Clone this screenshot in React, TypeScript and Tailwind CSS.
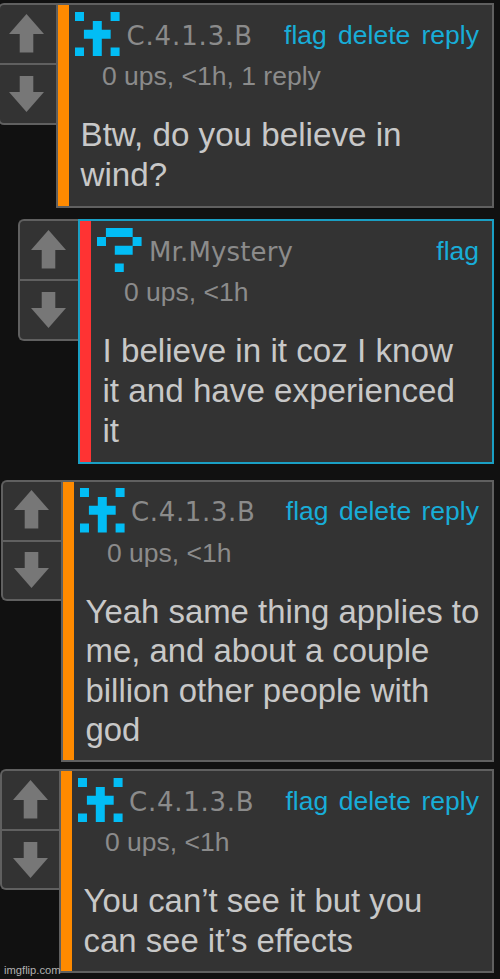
import React from "react";

type Comment = {
  name: string;
  meta: string;
  lines: string[];
  links: string[];
  row: string;
  votes: string;
  arrow: string;
  card: string;
  bar: string;
  nameClass: string;
  linksClass: string;
  textClass: string;
  icon: "cross" | "question";
};

const glyphs = {
  cross: ["1...1", "..1..", ".111.", "..1..", "1.1.1"],
  question: [".111.", "1...1", "..11.", ".....", "..1.."],
};

function Avatar({ icon }: { icon: "cross" | "question" }) {
  return (
    <svg className="block h-[44.5px] w-[44.5px] shrink-0" viewBox="0 0 5 5" fill="#02bdf5">
      <path
        d={glyphs[icon]
          .flatMap((row, y) => row.split("").map((c, x) => (c === "1" ? `M${x} ${y}h1.01v1.01h-1.01z` : "")))
          .join("")}
      />
    </svg>
  );
}

function Votes({ className, arrow }: { className: string; arrow: string }) {
  return (
    <div
      className={`flex shrink-0 flex-col overflow-hidden rounded-l-[6px] border-y-2 border-l-2 border-[#606060] bg-[#333] ${className}`}
    >
      <div className={`flex h-[60px] shrink-0 justify-center border-b-2 border-[#606060] pt-[8.5px] ${arrow}`}>
        <svg className="block h-[39px] w-[35px] shrink-0" viewBox="0 0 35 39" fill="#777">
          <path d="M17.5 0L35 20H24.3V38.5H10.7V20H0z" />
        </svg>
      </div>
      <div className={`flex flex-1 justify-center pt-[10.5px] ${arrow}`}>
        <svg className="block h-[36px] w-[35px] shrink-0" viewBox="0 0 35 36" fill="#777">
          <path d="M17.5 36L0 16H10.7V0H24.3V16H35z" />
        </svg>
      </div>
    </div>
  );
}

const comments: Comment[] = [
  {
    name: "C.4.1.3.B",
    meta: "0 ups, <1h, 1 reply",
    lines: ["Btw, do you believe in", "wind?"],
    links: ["flag", "delete", "reply"],
    row: "mt-[3px] h-[204.5px] -ml-[2px]",
    votes: "h-[122px] w-[58px]",
    arrow: "pr-[3px]",
    card: "border-[#606060]",
    bar: "bg-[#ff8a00]",
    nameClass: "pl-[0.5px] tracking-[0.85px]",
    linksClass: "gap-[11.3px]",
    textClass: "text-[33.2px] leading-[40px]",
    icon: "cross",
  },
  {
    name: "Mr.Mystery",
    meta: "0 ups, <1h",
    lines: ["I believe in it coz I know", "it and have experienced", "it"],
    links: ["flag"],
    row: "mt-[11.5px] h-[245px] ml-[18px]",
    votes: "h-[122px] w-[60px]",
    arrow: "pr-[1px]",
    card: "border-[#1a9fc4]",
    bar: "bg-[#ff3333]",
    nameClass: "pl-[1px] tracking-[0.15px]",
    linksClass: "",
    textClass: "text-[33.2px] leading-[40px]",
    icon: "question",
  },
  {
    name: "C.4.1.3.B",
    meta: "0 ups, <1h",
    lines: ["Yeah same thing applies to", "me, and about a couple", "billion other people with", "god"],
    links: ["flag", "delete", "reply"],
    row: "mt-[15.5px] h-[282px] ml-[1px]",
    votes: "h-[121px] w-[60px]",
    arrow: "pr-[1px]",
    card: "border-[#606060]",
    bar: "bg-[#ff8a00]",
    nameClass: "tracking-[0.65px]",
    linksClass: "gap-[10.4px]",
    textClass: "text-[32.9px] leading-[39.6px]",
    icon: "cross",
  },
  {
    name: "C.4.1.3.B",
    meta: "0 ups, <1h",
    lines: ["You can’t see it but you", "can see it’s effects"],
    links: ["flag", "delete", "reply"],
    row: "mt-[7.5px] h-[204px] ml-0",
    votes: "h-[121px] w-[59px]",
    arrow: "pr-[1px]",
    card: "border-[#606060]",
    bar: "bg-[#ff8a00]",
    nameClass: "tracking-[0.75px]",
    linksClass: "gap-[10.6px]",
    textClass: "text-[32.9px] leading-[39.7px]",
    icon: "cross",
  },
];

function CommentRow({ c }: { c: Comment }) {
  return (
    <div className={`mr-[6.5px] flex items-start ${c.row}`}>
      <Votes className={c.votes} arrow={c.arrow} />
      <div className={`flex h-full min-w-0 flex-1 border-2 bg-[#333] ${c.card}`}>
        <div className={`w-[11px] shrink-0 ${c.bar}`} />
        <div className="min-w-0 flex-1 whitespace-nowrap pl-[6px] pr-[12.5px] pt-[6.5px]">
          <div className="flex h-[44.5px]">
            <Avatar icon={c.icon} />
            <div
              className={`ml-[6.5px] pt-[8px] font-['DejaVu_Sans',sans-serif] text-[26px] leading-[32px] text-[#8b8b8b] ${c.nameClass}`}
            >
              {c.name}
            </div>
            <div className={`ml-auto flex pt-[8px] text-[26.5px] leading-[30px] text-[#18add8] ${c.linksClass}`}>
              {c.links.map((l) => (
                <span key={l}>{l}</span>
              ))}
            </div>
          </div>
          <div className="ml-[27px] pt-[5px] text-[26.5px] leading-[30px] text-[#8b8b8b]">{c.meta}</div>
          <div className={`ml-[5.5px] mt-[24px] text-[#c8c8c8] ${c.textClass}`}>
            {c.lines.map((l) => (
              <div key={l}>{l}</div>
            ))}
          </div>
        </div>
      </div>
    </div>
  );
}

export default function App() {
  return (
    <div className="relative flex h-[979px] w-[500px] flex-col overflow-hidden bg-[#111] font-['Liberation_Sans',Arial,sans-serif]">
      {comments.map((c, i) => (
        <CommentRow key={i} c={c} />
      ))}
      <div className="absolute bottom-[2.5px] left-[4px] text-[11.2px] leading-[13px] text-[#b0b0b0]">imgflip.com</div>
    </div>
  );
}
